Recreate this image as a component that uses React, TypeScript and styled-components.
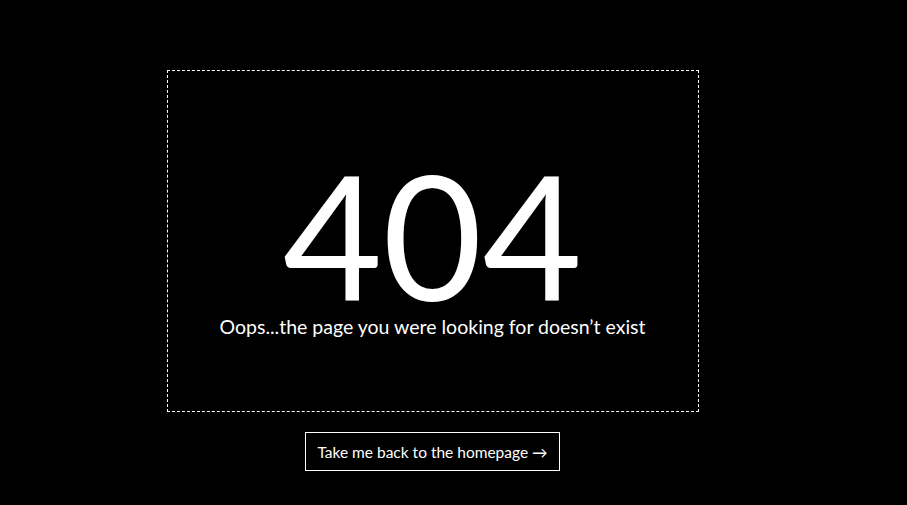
import React from "react";
import styled, { createGlobalStyle } from "styled-components";

const Global = createGlobalStyle`
  html, body { margin: 0; padding: 0; background: #000; }
  body { font-family: Lato, "Open Sans", sans-serif; color: #fff; }
`;

const Page = styled.main`
  width: 865px;
  min-height: 505px;
  display: flex;
  flex-direction: column;
  align-items: center;
  padding-top: 70px;
  box-sizing: border-box;
`;

const Frame = styled.section`
  width: 532px;
  height: 342px;
  box-sizing: border-box;
  border: 1px dashed #fff;
  display: flex;
  flex-direction: column;
  align-items: center;
  padding-top: 89px;
`;

const Code = styled.h1`
  margin: 0;
  font-family: Lato, sans-serif;
  font-weight: 400;
  font-size: 172px;
  line-height: 150px;
  color: #fff;
`;

const Message = styled.p`
  margin: 5px 0 0;
  font-family: Lato, sans-serif;
  font-size: 19.5px;
  line-height: 24px;
  color: #fff;
`;

const HomeLink = styled.a`
  margin-top: 20px;
  height: 39px;
  box-sizing: border-box;
  display: inline-flex;
  align-items: center;
  padding: 0 11px;
  border: 1px solid #fff;
  color: #fff;
  text-decoration: none;
  font-family: Lato, sans-serif;
  font-size: 15.5px;
`;

export default function App() {
  return (
    <>
      <Global />
      <Page>
        <Frame>
          <Code>404</Code>
          <Message>Oops...the page you were looking for doesn’t exist</Message>
        </Frame>
        <HomeLink href="#">Take me back to the homepage →</HomeLink>
      </Page>
    </>
  );
}
